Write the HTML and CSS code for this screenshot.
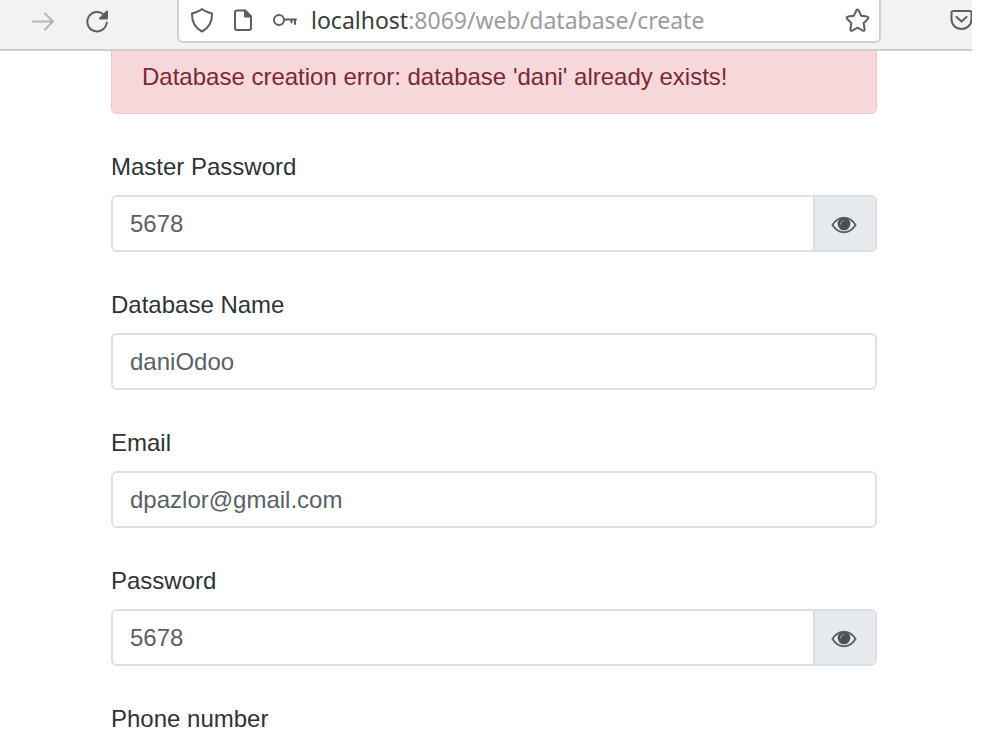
FILE: index.html
```html
<!DOCTYPE html>
<html lang="en">
<head>
<meta charset="utf-8">
<title>Create database</title>
<link rel="stylesheet" href="styles.css">
</head>
<body>
<svg class="defs" aria-hidden="true">
  <symbol id="eye" viewBox="0 0 26 18">
    <path class="lid" d="M1.500 9C4.500 4 8.500 1.800 13 1.800S21.500 4 24.500 9C21.500 14 17.500 16.200 13 16.200S4.500 14 1.500 9Z"/>
    <circle cx="13" cy="8" r="6.300"/>
    <path class="glint" d="M9.500 8.500C9.500 6 11 4.500 13.300 4.500"/>
  </symbol>
</svg>
<div class="window">
  <header class="toolbar">
    <nav class="nav">
      <button class="tool tool-off" type="button" aria-label="Forward" disabled>
        <svg width="24" height="20" viewBox="0 0 24 20"><path d="M2 10.500H22M14 2.500L22 10.500L14 18.500"/></svg>
      </button>
      <button class="tool" type="button" aria-label="Reload">
        <svg width="24" height="24" viewBox="0 0 24 24"><path d="M19.500 6.500A9.700 9.700 0 1 0 21.700 13.500"/><path class="solid" d="M22 2.500V9.500H15Z"/></svg>
      </button>
    </nav>
    <div class="address">
      <svg width="24" height="26" viewBox="0 0 24 26"><path d="M12 2C15 4.500 18.500 5.500 22 6.500C22.300 15 18.500 21 12 24.500C5.500 21 1.700 15 2 6.500C5.500 5.500 9 4.500 12 2Z"/></svg>
      <svg width="20" height="24" viewBox="0 0 20 24"><path d="M4 2.500H12L18 8.500V20Q18 22 16 22H4Q2 22 2 20V4.500Q2 2.500 4 2.500Z"/><path class="solid" d="M12 2.500L18 8.500H12Z"/></svg>
      <svg width="26" height="16" viewBox="0 0 26 16"><circle cx="7" cy="8" r="5"/><path d="M12 7.500H24M23 7.500V12M19.500 7.500V10.500"/></svg>
      <div class="url"><span class="host">localhost</span>:8069/web/database/create</div>
      <button class="tool" type="button" aria-label="Bookmark this page">
        <svg width="26" height="26" viewBox="0 0 26 26"><path d="M12.300 3.500Q13.500 1.500 14.700 3.500L17.200 8.700L23 9.600Q25.300 10.200 23.700 12L19.600 16.200L20.600 22Q20.700 24.400 18.500 23.500L13.500 20.700L8.500 23.500Q6.300 24.400 6.400 22L7.400 16.200L3.300 12Q1.700 10.200 4 9.600L9.800 8.700Z"/></svg>
      </button>
    </div>
    <button class="tool pocket" type="button" aria-label="Save to Pocket">
      <svg width="22" height="22" viewBox="0 0 22 22"><path d="M3.500 2H19.500Q21.500 2 21.500 4V10C21.500 16 17 20 11.500 20S1.500 16 1.500 10V4Q1.500 2 3.500 2ZM6.500 8L11.500 12.500L16.500 8"/></svg>
    </button>
  </header>
  <main class="page">
    <div class="alert" role="alert">Database creation error: database 'dani' already exists!</div>
    <form class="form">
      <div class="field">
        <label for="master">Master Password</label>
        <div class="group">
          <input id="master" type="text" value="5678">
          <button class="reveal" type="button" aria-label="Show master password"><svg width="26" height="18"><use href="#eye"/></svg></button>
        </div>
      </div>
      <div class="field">
        <label for="name">Database Name</label>
        <div class="group"><input id="name" type="text" value="daniOdoo"></div>
      </div>
      <div class="field">
        <label for="email">Email</label>
        <div class="group"><input id="email" type="text" value="dpazlor@gmail.com"></div>
      </div>
      <div class="field">
        <label for="password">Password</label>
        <div class="group">
          <input id="password" type="text" value="5678">
          <button class="reveal" type="button" aria-label="Show password"><svg width="26" height="18"><use href="#eye"/></svg></button>
        </div>
      </div>
      <div class="field"><span class="label">Phone number</span></div>
    </form>
  </main>
</div>
</body>
</html>
```
FILE: styles.css
```css
* { box-sizing: border-box; }
body {
  margin: 0;
  background: #fff;
  color: #2f3337;
  font: 24px/36px "Liberation Sans", Arial, sans-serif;
}
.defs { position: absolute; width: 0; height: 0; }
.window { margin-right: 36px; }
button { padding: 0; border: 0; background: none; font: inherit; }
svg { display: block; flex: none; }

.toolbar {
  display: flex;
  align-items: flex-start;
  background: #f3f2f0;
  border-bottom: 2px solid #d0cfcd;
  padding-bottom: 6px;
  overflow: hidden;
}
.toolbar svg {
  fill: none;
  stroke: #5f5f5f;
  stroke-width: 2;
  stroke-linejoin: round;
  stroke-linecap: round;
}
.toolbar .solid { fill: #5b5b5b; }
.toolbar .tool-off svg { stroke: #b5b5b3; }
.nav {
  display: flex;
  align-items: center;
  gap: 30px;
  width: 177px;
  height: 41px;
  padding-left: 31px;
}
.address {
  flex: 1;
  display: flex;
  align-items: center;
  height: 43px;
  padding: 0 9px 2px 11px;
  background: #fff;
  border: 2px solid #d0cfcd;
  border-top: 0;
  border-radius: 0 0 6px 6px;
}
.address svg + svg { margin-left: 19px; }
.url {
  flex: 1;
  margin-left: 13px;
  color: #9c9c9c;
  font: 23px/28px "Noto Sans", sans-serif;
  white-space: nowrap;
}
.host { color: #3c3c3c; }
.pocket { height: 40px; margin-left: 69px; }

.page { padding: 0 95px 0 111px; }
.alert {
  padding: 8px 30px 18px;
  border: 1px solid #f3c6cb;
  border-top: 0;
  border-radius: 0 0 6px 6px;
  background: #f6d7da;
  color: #7a2a33;
}
.form {
  display: flex;
  flex-direction: column;
  gap: 35px;
  padding-top: 35px;
}
.field { display: flex; flex-direction: column; gap: 10px; }
.group {
  display: flex;
  height: 57px;
  border: 2px solid #dce0e4;
  border-radius: 6px;
  overflow: hidden;
}
input {
  flex: 1;
  min-width: 0;
  padding: 0 17px;
  border: 0;
  outline: 0;
  background: #fff;
  color: #5a6067;
  font: inherit;
}
.reveal {
  display: flex;
  align-items: center;
  justify-content: center;
  width: 62px;
  padding: 2px 2px 0 0;
  border-left: 2px solid #d8dce1;
  background: #e8ebee;
}
.reveal svg { fill: #495057; }
.lid { fill: none; stroke: #5f656b; stroke-width: 2; }
.glint { fill: none; stroke: #a3a8ad; stroke-width: 1; }
```
